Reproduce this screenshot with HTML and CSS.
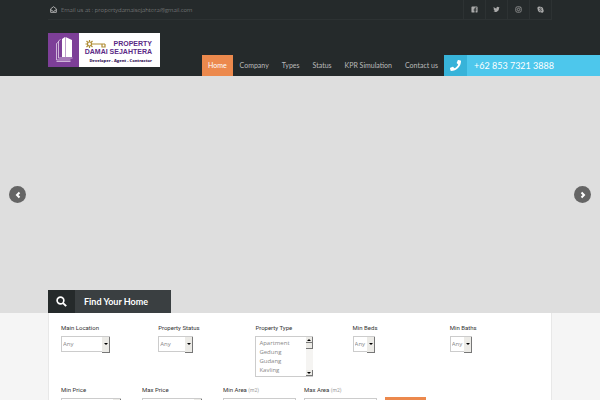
FILE: index.html
```html
<!DOCTYPE html>
<html lang="en">
<head>
    <meta charset="UTF-8">
    <meta name="viewport" content="width=device-width, initial-scale=1.0">
    <title>Property Damai Sejahtera</title>
    <link rel="stylesheet" href="styles.css">
</head>
<body>
    <header class="header">
        <div class="top-bar">
            <div class="email">
                <svg viewBox="0 0 16 16" fill="none" stroke="currentColor" stroke-width="2"><path d="M1.5 6.5 8 1.5l6.5 5v8h-13zM1.5 8.5 8 12.5l6.5-4"/></svg>
                <span>Email us at : <a href="mailto:propertydamaisejahtera@gmail.com">propertydamaisejahtera@gmail.com</a></span>
            </div>
            <div class="social">
                <a href="#" aria-label="Facebook"><svg viewBox="0 0 16 16"><path fill="currentColor" fill-rule="evenodd" d="M3 1h10a2 2 0 0 1 2 2v10a2 2 0 0 1-2 2h-2.500v-4.500h2l.4-2.500h-2.400V6.500c0-.8.4-1.200 1.200-1.200h1.300V3.200h-2C9.200 3.200 8 4.300 8 6.200V8H6v2.500h2V15H3a2 2 0 0 1-2-2V3a2 2 0 0 1 2-2z"/></svg></a>
                <a href="#" aria-label="Twitter"><svg viewBox="0 0 24 24"><path fill="currentColor" d="M23 5.100a9 9 0 0 1-2.600.7 4.500 4.500 0 0 0 2-2.500 9 9 0 0 1-2.900 1.100 4.500 4.500 0 0 0-7.700 4.100A12.800 12.800 0 0 1 2.500 3.800a4.500 4.500 0 0 0 1.400 6 4.500 4.500 0 0 1-2-.6c0 2.200 1.500 4.100 3.600 4.500a4.500 4.500 0 0 1-2 .1 4.500 4.500 0 0 0 4.200 3.100A9 9 0 0 1 1 18.800a12.800 12.800 0 0 0 19.700-11.400A9 9 0 0 0 23 5.100z"/></svg></a>
                <a href="#" aria-label="Instagram"><svg viewBox="0 0 16 16" fill="none" stroke="currentColor" stroke-width="1.600"><rect x="1.800" y="1.800" width="12.400" height="12.400" rx="3.500"/><circle cx="8" cy="8" r="2.800"/><circle cx="11.700" cy="4.300" r=".3"/></svg></a>
                <a href="#" aria-label="Skype"><svg viewBox="0 0 16 16"><path fill="currentColor" d="M5 1a4 4 0 0 1 2.200.6A6.500 6.500 0 0 1 14.400 8.800 4 4 0 0 1 8.800 14.400 6.500 6.500 0 0 1 1.600 7.200 4 4 0 0 1 5 1z"/><path fill="none" stroke="#252a2b" stroke-width="1.600" d="M10.600 6C10 4.300 5.600 4.200 5.600 6.300c0 2 5 1.300 5 3.500 0 2.200-4.700 2.100-5.300.1"/></svg></a>
            </div>
        </div>
        <div class="main-bar">
            <a class="logo" href="#">
                <span class="logo-mark">
                    <svg viewBox="0 0 31 34"><g fill="#fff"><path d="M14 6 17 4v20h-3zM17.500 4 24 7v17h-6.500z"/></g><g fill="none" stroke="#e3d3ea" stroke-width=".8"><path d="M12.500 6.500 10.500 8v17h14M10.500 9 8.500 10.500v16.500h14M8.500 28.500h14"/></g></svg>
                </span>
                <span class="logo-text">
                    <span class="logo-name">
                        <svg viewBox="0 0 22 8"><g fill="none" stroke="#b08d35" stroke-width="1.200"><circle cx="4.500" cy="4" r="2"/><path d="M6.500 4H20M17 4v3h3V4M4.500 0v2M4.500 6v2M.5 4h2M1.500 1l1.500 1.500M1.500 7 3 5.500M7.500 1 6 2.500M7.500 7 6 5.500"/></g></svg>
                        PROPERTY
                    </span>
                    <span class="logo-name">DAMAI SEJAHTERA</span>
                    <span class="logo-tagline">Developer - Agent - Contractor</span>
                </span>
            </a>
            <nav class="nav">
                <a class="active" href="#">Home</a>
                <a href="#">Company</a>
                <a href="#">Types</a>
                <a href="#">Status</a>
                <a href="#">KPR Simulation</a>
                <a href="#">Contact us</a>
            </nav>
            <a class="phone" href="tel:+6285373213888">
                <span class="phone-icon"><svg viewBox="0 0 512 512"><path fill="currentColor" d="M493 25 389 1c-11-3-23 3-27 14l-48 112c-4 10-1 21 7 28l61 50c-36 77-99 141-178 178l-50-61c-7-8-18-11-28-7L14 363c-11 4-17 16-14 27l24 104c3 11 12 18 24 18 256 0 464-207 464-464 0-11-8-21-19-23z"/></svg></span>
                <span>+62 853 7321 3888</span>
            </a>
        </div>
    </header>

    <section class="slider">
        <button class="arrow" type="button" aria-label="Previous"><svg viewBox="0 0 8 8"><path d="M5.500 1.500 3 4l2.500 2.500"/></svg></button>
        <button class="arrow" type="button" aria-label="Next"><svg viewBox="0 0 8 8"><path d="M2.500 1.500 5 4 2.500 6.500"/></svg></button>
        <h2 class="search-title">
            <span class="search-icon"><svg viewBox="0 0 16 16" fill="none" stroke="currentColor"><circle cx="6.500" cy="6.500" r="4.900" stroke-width="2.400"/><path d="m10.300 10.300 4.500 4.500" stroke-width="2.800"/></svg></span>
            <span class="search-label">Find Your Home</span>
        </h2>
    </section>

    <form class="search-form">
        <div class="row row-top">
            <div class="field">
                <label for="location">Main Location</label>
                <div class="select select-location"><select id="location"><option>Any</option></select></div>
            </div>
            <div class="field">
                <label for="status">Property Status</label>
                <div class="select select-status"><select id="status"><option>Any</option></select></div>
            </div>
            <div class="field">
                <label for="type">Property Type</label>
                <div class="listbox">
                    <select id="type" multiple size="4">
                        <option>Apartment</option>
                        <option>Gedung</option>
                        <option>Gudang</option>
                        <option>Kavling</option>
                    </select>
                    <div class="scrollbar" aria-hidden="true">
                        <span class="scroll-up"></span>
                        <span class="scroll-thumb"></span>
                        <span class="scroll-down"></span>
                    </div>
                </div>
            </div>
            <div class="field">
                <label for="beds">Min Beds</label>
                <div class="select select-small"><select id="beds"><option>Any</option></select></div>
            </div>
            <div class="field">
                <label for="baths">Min Baths</label>
                <div class="select select-small"><select id="baths"><option>Any</option></select></div>
            </div>
        </div>
        <div class="row row-bottom">
            <div class="field">
                <label for="min-price">Min Price</label>
                <div class="select select-price"><select id="min-price"></select></div>
            </div>
            <div class="field">
                <label for="max-price">Max Price</label>
                <div class="select select-price"><select id="max-price"></select></div>
            </div>
            <div class="field">
                <label for="min-area">Min Area <small>(m2)</small></label>
                <input type="text" id="min-area">
            </div>
            <div class="field">
                <label for="max-area">Max Area <small>(m2)</small></label>
                <input type="text" id="max-area">
            </div>
            <button class="submit" type="submit" aria-label="Search"></button>
        </div>
    </form>
</body>
</html>
```
FILE: styles.css
```css
* {
    box-sizing: border-box;
}

body {
    margin: 0;
    background-color: #f5f5f5;
    font-family: "Open Sans", sans-serif;
    font-size: 6px;
}

a {
    color: inherit;
    text-decoration: none;
}

svg {
    display: block;
}

.header {
    background-color: #252a2b;
    color: #999;
}

.top-bar {
    display: flex;
    justify-content: space-between;
    height: 20px;
    margin: 0 8%;
    border-bottom: 1px solid #2d3233;
}

.email {
    display: flex;
    align-items: center;
    gap: 4px;
    padding-left: 2px;
    font-weight: 300;
}

.email svg {
    width: 7px;
    height: 7px;
    color: #bbb;
}

.social {
    display: flex;
    border-right: 1px solid #2d3233;
}

.social a {
    display: flex;
    align-items: center;
    justify-content: center;
    width: 22px;
    border-left: 1px solid #2d3233;
    color: #aaa;
}

.social svg {
    width: 7px;
    height: 7px;
}

.main-bar {
    display: flex;
    align-items: flex-end;
    padding: 13px 0 0 8%;
}

.logo {
    display: flex;
    width: 112px;
    height: 34px;
    margin-bottom: 9px;
    background-color: white;
}

.logo-mark {
    width: 31px;
    background-color: #7d3f98;
}

.logo-text {
    flex: 1;
    display: flex;
    flex-direction: column;
    align-items: flex-end;
    padding: 7px 8px 0 0;
    color: #5b2a86;
    font-family: "Liberation Sans", sans-serif;
    font-weight: bold;
    white-space: nowrap;
}

.logo-name {
    display: flex;
    gap: 6px;
    font-size: 7px;
    line-height: 8px;
}

.logo-name svg {
    width: 22px;
    height: 8px;
}

.logo-tagline {
    padding-top: 1px;
    font-family: "Open Sans", sans-serif;
    font-size: 4px;
    font-weight: 800;
    line-height: 8px;
    color: #3c1d5c;
}

.nav {
    display: flex;
    gap: 1px;
    margin-left: auto;
    font-family: Lato, sans-serif;
    font-size: 7px;
    line-height: 21px;
    color: #bbb;
}

.nav a {
    padding: 0 6px;
}

.nav .active {
    background-color: #ec894d;
    color: white;
}

.phone {
    display: flex;
    flex-shrink: 0;
    width: 26vw;
    background-color: #4dc7ec;
    color: white;
    font-family: Lato, sans-serif;
    font-size: 9px;
    line-height: 21px;
}

.phone-icon {
    display: flex;
    align-items: center;
    justify-content: center;
    width: 23px;
    margin-right: 7px;
    background-color: #37b3d9;
}

.phone-icon svg {
    width: 11px;
    height: 11px;
}

.slider {
    position: relative;
    display: flex;
    align-items: center;
    justify-content: space-between;
    height: 237px;
    padding: 0 9px;
    background-color: #dedede;
}

.arrow {
    display: flex;
    align-items: center;
    justify-content: center;
    width: 17px;
    height: 17px;
    padding: 0;
    border: none;
    border-radius: 50%;
    background-color: #656565;
    cursor: pointer;
}

.arrow svg {
    width: 8px;
    height: 8px;
    fill: none;
    stroke: white;
    stroke-width: 2;
}

.search-title {
    position: absolute;
    left: 8%;
    bottom: 0;
    display: flex;
    margin: 0;
    background-color: #3a3f41;
    color: white;
    font-family: Lato, sans-serif;
    font-size: 9px;
    line-height: 23px;
}

.search-icon {
    display: flex;
    align-items: center;
    justify-content: center;
    width: 27px;
    background-color: #252a2b;
}

.search-icon svg {
    width: 11px;
    height: 11px;
}

.search-label {
    padding: 0 23px 0 9px;
}

.search-form {
    margin: 0 8%;
    padding: 9px 4px 16px 12px;
    border: 1px solid #e8e8e8;
    border-top: none;
    background-color: white;
}

.row {
    display: grid;
}

.row-top {
    grid-template-columns: repeat(5, 1fr);
    margin-bottom: 7px;
}

.row-bottom {
    grid-template-columns: repeat(6, 1fr);
}

label {
    display: block;
    margin-bottom: 2px;
    font-family: Roboto, sans-serif;
    line-height: 12px;
    color: #333;
}

label small {
    font-size: 5px;
    color: #999;
}

.select {
    position: relative;
    height: 16px;
}

.select-location {
    width: 49px;
}

.select-status {
    width: 35px;
}

.select-small {
    width: 22px;
}

.select-price {
    width: 60px;
}

select,
input {
    display: block;
    width: 100%;
    height: 16px;
    margin: 0;
    padding: 0 1px;
    border: 1px solid #ccc;
    border-radius: 0;
    background-color: white;
    color: #888;
    font-family: "Open Sans", sans-serif;
    font-size: 6px;
    appearance: none;
}

input {
    width: 73px;
}

.select::before {
    content: "";
    position: absolute;
    top: 1px;
    right: 0;
    width: 7px;
    height: 15px;
    border-right: 1px solid #777;
    border-bottom: 1px solid #777;
    background-color: #ecebe7;
    pointer-events: none;
}

.select::after {
    content: "";
    position: absolute;
    top: 7px;
    right: 2px;
    border: 2px solid transparent;
    border-top: 2px solid black;
    border-bottom: none;
    pointer-events: none;
}

.listbox {
    position: relative;
    width: 58px;
}

.listbox select {
    height: 41px;
    padding: 2px 3px;
    overflow: hidden;
}

.listbox option {
    min-height: 9px;
    padding: 0;
    line-height: 9px;
}

.scrollbar {
    position: absolute;
    top: 1px;
    right: 0;
    bottom: 1px;
    display: flex;
    flex-direction: column;
    width: 7px;
    background-color: #f5f4f2;
}

.scrollbar span {
    display: flex;
    align-items: center;
    justify-content: center;
    height: 6px;
    border-right: 1px solid #777;
    border-bottom: 1px solid #777;
    background-color: #ecebe7;
}

.scroll-up::before,
.scroll-down::before {
    content: "";
    border: 2px solid transparent;
}

.scroll-up::before {
    border-top: none;
    border-bottom: 2px solid black;
}

.scroll-down::before {
    border-top: 2px solid black;
    border-bottom: none;
}

.scrollbar .scroll-down {
    margin-top: auto;
}

.submit {
    width: 41px;
    height: 20px;
    margin-top: 13px;
    padding: 0;
    border: none;
    background-color: #ec894d;
}
```
